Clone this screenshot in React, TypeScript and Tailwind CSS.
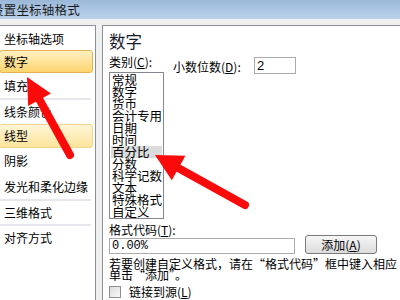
const font = {
  fontFamily: '"Noto Sans CJK SC", "Noto Sans", sans-serif',
};

const navItems = [
  { label: "坐标轴选项", h: "h-[23px]" },
  { label: "数字", h: "h-[23px]", active: true },
  { label: "填充", h: "h-[25px]", sep: true },
  { label: "线条颜色", h: "h-[24px]" },
  { label: "线型", h: "h-[24px]", hover: true },
  { label: "阴影", h: "h-[26px]" },
  { label: "发光和柔化边缘", h: "h-[25px]", sep: true },
  { label: "三维格式", h: "h-[23px]", sep: true },
  { label: "对齐方式", h: "h-[24px]" },
];

const categories = [
  "常规",
  "数字",
  "货币",
  "会计专用",
  "日期",
  "时间",
  "百分比",
  "分数",
  "科学记数",
  "文本",
  "特殊格式",
  "自定义",
];

function Arrow({
  tip,
  tail,
  head = 26,
  half = 13,
}: {
  tip: [number, number];
  tail: [number, number];
  head?: number;
  half?: number;
}) {
  const dx = tail[0] - tip[0];
  const dy = tail[1] - tip[1];
  const len = Math.hypot(dx, dy);
  const ux = dx / len;
  const uy = dy / len;
  const bx = tip[0] + ux * head;
  const by = tip[1] + uy * head;
  const px = -uy;
  const py = ux;
  const pts = [
    `${tip[0]},${tip[1]}`,
    `${bx + px * half},${by + py * half}`,
    `${bx - px * half},${by - py * half}`,
  ].join(" ");
  return (
    <g>
      <line
        x1={bx - ux * 2}
        y1={by - uy * 2}
        x2={tail[0]}
        y2={tail[1]}
        stroke="#fb0a0a"
        strokeWidth={8}
        strokeLinecap="round"
      />
      <polygon points={pts} fill="#fb0a0a" />
    </g>
  );
}

export default function App() {
  return (
    <div
      className="relative h-[300px] w-[400px] overflow-hidden bg-[#f0f0f0] text-black"
      style={font}
    >
      {/* Title bar */}
      <div className="flex h-[19px] items-center bg-gradient-to-b from-[#9bb8d9] to-[#bad2eb]">
        <span className="ml-[-9px] text-[12.5px] leading-[19px] tracking-[0.2px] text-[#1b1b1b]">
          设置坐标轴格式
        </span>
      </div>

      <div className="flex pt-[6px]">
        {/* Left nav */}
        <div className="ml-[-2px] h-[290px] w-[98px] shrink-0 border border-[#8d9099] bg-white pt-[1px]">
          {navItems.map((item) => (
            <div key={item.label}>
              <div className={`${item.h} mr-[2px] flex items-center`}>
                <div
                  className={
                    item.active
                      ? "flex h-full w-full items-center rounded-[3px] border border-[#e3b24e] bg-gradient-to-b from-[#fff1c2] to-[#fdd46c] pl-[4px]"
                      : item.hover
                        ? "flex h-full w-full items-center rounded-[3px] border border-[#f2d58a] bg-gradient-to-b from-[#fff6d8] to-[#fde49a] pl-[4px]"
                        : "flex h-full w-full items-center pl-[5px]"
                  }
                >
                  <span className="text-[12px] leading-[14px]">{item.label}</span>
                </div>
              </div>
              {item.sep && <div className="mr-[4px] h-[2px] bg-[#e6e6ec]" />}
            </div>
          ))}
        </div>

        {/* Right panel */}
        <div className="ml-[6px] h-[290px] w-[320px] shrink-0 border border-[#8d9099] bg-white pl-[6px] pt-[5px]">
          <div className="text-[16.5px] leading-[20px] text-[#1a1a2e]">数字</div>

          <div className="mt-[4px] flex h-[17px] items-start text-[12px] leading-[14px]">
            <span className="w-[64px]">
              类别(<span className="underline">C</span>):
            </span>
            <span className="mt-[5px] w-[81px]">
              小数位数(<span className="underline">D</span>):
            </span>
            <div
              className="mt-[2px] flex h-[17px] w-[42px] items-center border border-[#ababab] pl-[2px] text-[13px]"
              style={{ fontFamily: '"Liberation Sans", sans-serif' }}
            >
              2
            </div>
          </div>

          {/* Category list */}
          <div className="h-[147px] w-[55px] border border-[#828790] pl-[1px] pt-[1px]">
            {categories.map((c) => (
              <div
                key={c}
                className={`h-[12px] pl-[1px] text-[12.5px] leading-[12px] ${
                  c === "百分比" ? "mr-[1px] bg-[#dcdcdc]" : ""
                }`}
              >
                {c}
              </div>
            ))}
          </div>

          <div className="mt-[4px] text-[12px] leading-[14px]">
            格式代码(<span className="underline">T</span>):
          </div>

          <div className="mt-[-2px] flex items-start">
            <div
              className="mt-[3px] flex h-[16px] w-[186px] items-center border border-[#ababab] pl-[2px] text-[12px]"
              style={{ fontFamily: '"Liberation Mono", monospace' }}
            >
              0.00%
            </div>
            <button className="ml-[10px] flex h-[19px] w-[72px] items-center justify-center rounded-[3px] border border-[#7a7a7a] bg-gradient-to-b from-[#f6f6f6] to-[#dcdcdc] text-[12px] leading-[14px]">
              添加(<span className="underline">A</span>)
            </button>
          </div>

          <div className="mt-[4px] whitespace-nowrap text-[12px] leading-[11px]">
            <div>若要创建自定义格式，请在“格式代码”框中键入相应</div>
            <div>单击“添加”。</div>
          </div>

          <div className="mt-[5px] flex items-center">
            <div className="h-[12px] w-[12px] border border-[#8f8f8f] bg-gradient-to-br from-[#dcdcdc] to-[#f8f8f8]" />
            <span className="ml-[8px] text-[12px] leading-[13px]">
              链接到源(<span className="underline">L</span>)
            </span>
          </div>
        </div>
      </div>

      {/* Annotation arrows */}
      <svg
        className="pointer-events-none absolute left-0 top-0"
        width={400}
        height={300}
        viewBox="0 0 400 300"
      >
        <Arrow tip={[27, 77]} tail={[70, 155]} head={26} half={13} />
        <Arrow tip={[155, 155]} tail={[245, 205]} head={27} half={14} />
      </svg>
    </div>
  );
}
